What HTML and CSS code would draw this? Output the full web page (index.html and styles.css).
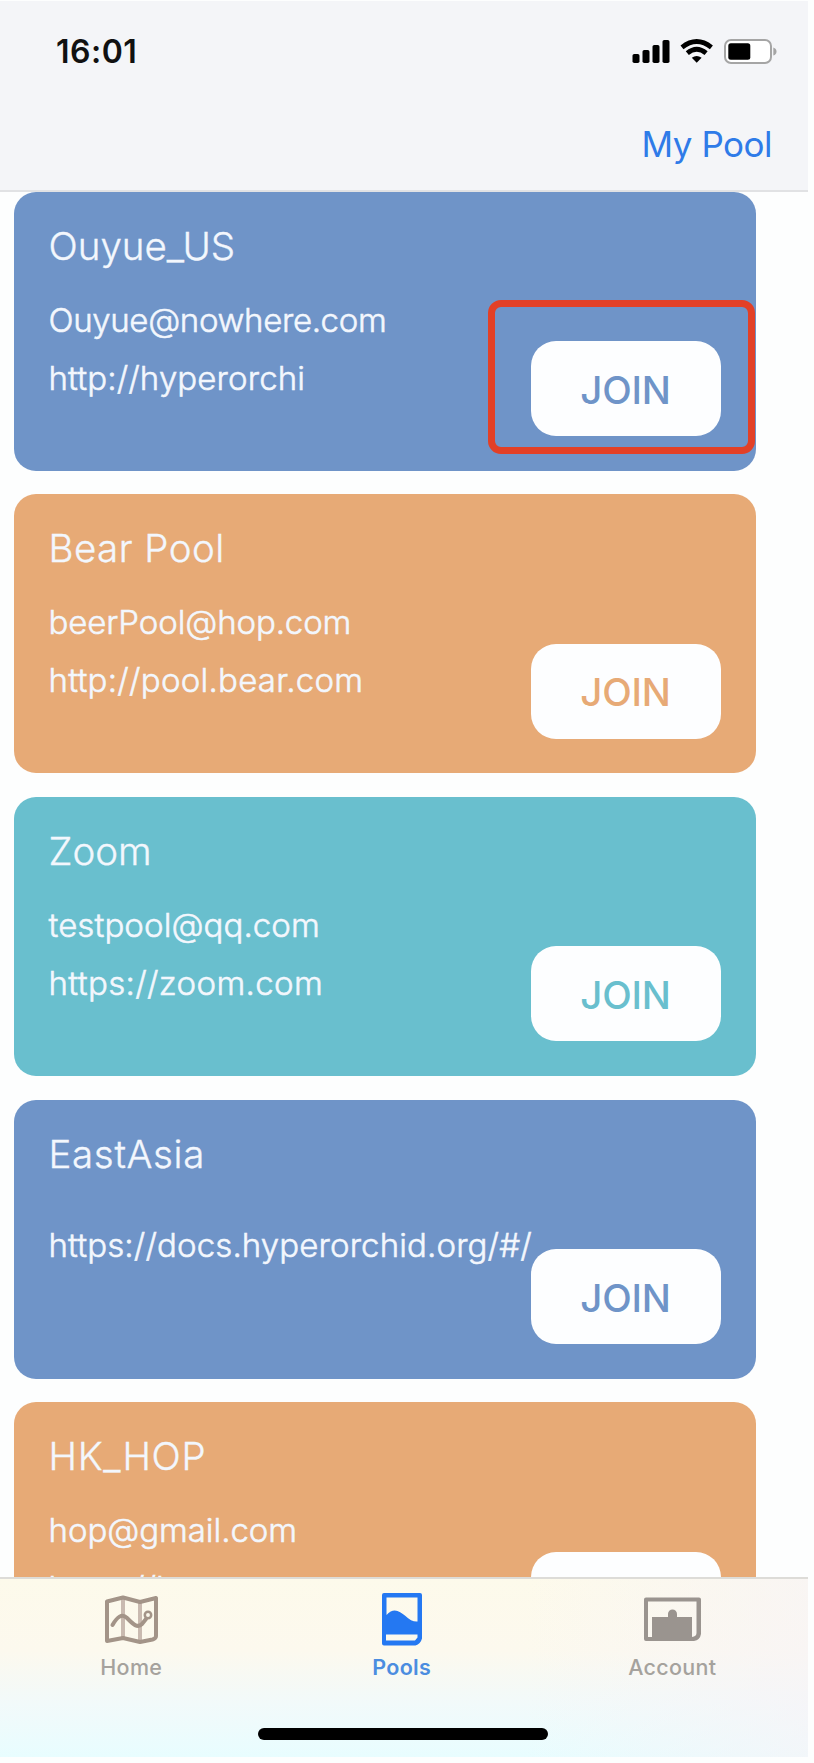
FILE: index.html
```html
<!DOCTYPE html>
<html lang="en">
<head>
<meta charset="utf-8">
<title>Pools</title>
<link rel="stylesheet" href="styles.css">
</head>
<body>
<div class="phone">
  <header class="header">
    <div class="status">
      <span class="time">16:01</span>
      <svg class="status-icons" width="146" height="26" viewBox="0 0 146 26">
        <rect x="0.5" y="15" width="7" height="9" rx="1.8"/>
        <rect x="10.5" y="11" width="7" height="13" rx="1.8"/>
        <rect x="20.5" y="6" width="7" height="18" rx="1.8"/>
        <rect x="30.5" y="1" width="7" height="23" rx="1.8"/>
        <g fill="none" stroke="#000" stroke-width="4.8">
          <path d="M50 8.3Q64.7-3.3 79.4 8.3"/>
          <path d="M55.3 14.2Q64.7 6.4 74.1 14.2"/>
        </g>
        <path d="M59.8 18.8Q64.7 15 69.6 18.8L64.7 23.8Z"/>
        <rect x="93" y="1" width="46" height="23" rx="6" fill="#fff" stroke="#a5a5a5" stroke-width="2"/>
        <rect x="96.3" y="4.3" width="22" height="16.4" rx="2.5"/>
        <path d="M141.3 8.5Q144.5 9.5 144.5 12.5T141.3 16.5Z" fill="#a5a5a5"/>
      </svg>
    </div>
    <a class="my-pool">My Pool</a>
  </header>
  <main class="list">
    <section class="card blue">
      <h2 class="name n1">Ouyue_US</h2>
      <p class="line email e1">Ouyue@nowhere.com</p>
      <p class="line u1">http://hyperorchi</p>
      <button class="join">JOIN</button>
      <span class="highlight"></span>
    </section>
    <section class="card orange">
      <h2 class="name n2">Bear Pool</h2>
      <p class="line email e2">beerPool@hop.com</p>
      <p class="line u2">http://pool.bear.com</p>
      <button class="join">JOIN</button>
    </section>
    <section class="card teal">
      <h2 class="name n3">Zoom</h2>
      <p class="line email e3">testpool@qq.com</p>
      <p class="line u3">https://zoom.com</p>
      <button class="join">JOIN</button>
    </section>
    <section class="card blue">
      <h2 class="name n4">EastAsia</h2>
      <p class="line solo u4">https://docs.hyperorchid.org/#/</p>
      <button class="join">JOIN</button>
    </section>
    <section class="card orange">
      <h2 class="name n5">HK_HOP</h2>
      <p class="line email e5">hop@gmail.com</p>
      <p class="line u5">https://hop.com</p>
      <button class="join">JOIN</button>
    </section>
  </main>
  <nav class="tabs">
    <div class="tab-row">
      <a class="tab home">
        <svg width="56" height="56" viewBox="0 0 56 56" fill="none" stroke="#a39488" stroke-width="4" stroke-linejoin="round">
          <path stroke-width="4" stroke="#c9bab0" d="M20 7V47M37 10V50"/>
          <path d="M4 10.500L20 6.500L37 11L53 7V45Q53 47.500 49.500 48.500L37 51L20 47L4 50Z"/>
          <path stroke-linecap="round" d="M9.500 34C14 26 19 22 24 27C29 32 34 38 39 33L43 28"/>
          <circle cx="45" cy="24" r="3.200" stroke-width="2.500" fill="#fbf8ec"/>
        </svg>
        <span class="label">Home</span>
      </a>
      <a class="tab pools">
        <svg width="56" height="56" viewBox="0.5 0 56 56">
          <path fill="#2478f2" fill-rule="evenodd" d="M10.500 2H46.500Q48.500 2 48.500 4V47.500Q47 53 42 54.500H10.500Q8.500 54.500 8.500 52.500V4Q8.500 2 10.500 2ZM13 6.500V24C20 16 26 20 32 25Q38 31 44 30.500V6.500ZM12.500 43.500V49.500H41.500L44 46.500V43.500Z"/>
        </svg>
        <span class="label">Pools</span>
      </a>
      <a class="tab account">
        <svg width="58" height="56" viewBox="0 0 58 56">
          <path fill="#9a948f" fill-rule="evenodd" d="M3 6.500H56Q58 6.500 58 8.500V43Q57 49 51 50H3Q1 50 1 48V8.500Q1 6.500 3 6.500ZM5 10.500V46H9V26H25V23A4.500 4.500 0 0 1 34 23V26H49V46Q53.500 45.500 53.500 42V10.500Z"/>
        </svg>
        <span class="label">Account</span>
      </a>
    </div>
    <div class="home-bar"></div>
  </nav>
</div>
</body>
</html>
```
FILE: styles.css
```css
* { box-sizing: border-box; }
body {
  margin: 0;
  background: #fdfefe;
  font-family: Inter, "Liberation Sans", sans-serif;
}
.phone {
  display: flex;
  flex-direction: column;
  width: 814px;
  height: 1763px;
  padding-top: 1px;
  overflow: hidden;
}
.header {
  display: flex;
  flex-direction: column;
  flex: none;
  width: 808px;
  height: 191px;
  background: #f4f5f8;
  border-bottom: 2px solid #e1e2e4;
}
.status {
  display: flex;
  justify-content: space-between;
  align-items: flex-start;
  padding: 38px 30px 0 56px;
}
.time {
  font-size: 32px;
  line-height: 26px;
  font-weight: 600;
  letter-spacing: 0.500px;
  color: #111;
}
.my-pool {
  align-self: flex-end;
  margin: 57px 36px 0 0;
  font-size: 35px;
  line-height: 44px;
  letter-spacing: -0.500px;
  color: #2f7be8;
}
.list {
  display: flex;
  flex-direction: column;
  gap: 23.700px;
  height: 1386px;
  flex: none;
  margin-top: -1px;
  padding: 0.600px 0 0 14px;
  overflow: hidden;
}
.card {
  position: relative;
  flex: none;
  width: 742px;
  height: 279px;
  padding: 31px 34.500px;
  border-radius: 22px;
  color: #f3f7fd;
  -webkit-text-stroke: 0.350px #f3f7fd;
}
.blue { background: #6f94c8; --tone: #6f94c8; }
.orange { background: #e7aa76; --tone: #e7aa76; }
.teal { background: #69bfce; --tone: #69bfce; }
.name {
  margin: 0;
  font-size: 38.500px;
  line-height: 46px;
  font-weight: 300;
}
.line {
  margin: 0;
  font-size: 33px;
  line-height: 58px;
  font-weight: 300;
  white-space: nowrap;
  -webkit-text-stroke-width: 0.550px;
}
.email { margin-top: 22px; }
.solo { margin-top: 39px; }
.n2 { letter-spacing: 0.450px; }
.n4, .n5 { letter-spacing: 0.650px; }
.e1 { letter-spacing: -0.350px; }
.e2 { letter-spacing: -0.120px; }
.e3 { letter-spacing: 0.080px; }
.e5 { letter-spacing: -0.050px; }
.u1, .u4 { letter-spacing: 0.120px; }
.u2 { letter-spacing: 0.250px; }
.u3 { letter-spacing: 0.350px; }
.join {
  position: absolute;
  right: 35px;
  bottom: 34.500px;
  width: 190px;
  height: 95px;
  padding: 2px 1px 0 0;
  border: 0;
  border-radius: 25px;
  background: #fdfeff;
  color: var(--tone);
  font: 500 38.500px Inter, sans-serif;
  letter-spacing: -0.200px;
  -webkit-text-stroke: 0;
}
.highlight {
  position: absolute;
  right: 1.500px;
  bottom: 17px;
  width: 267px;
  height: 154px;
  border: 7.500px solid #e24027;
  border-radius: 13px;
}
.tabs {
  flex: none;
  width: 808px;
  height: 180px;
  border-top: 2px solid #dddcd8;
  background: linear-gradient(90deg, #fcf7f400, #fcf7f400 65%, #f7f3f7aa), linear-gradient(#fdfaeb 0, #fcf9ee 40%, #f2fafa 70%, #e8fdff);
}
.tab-row {
  display: grid;
  grid-template-columns: repeat(3, 270.500px);
  margin-left: -4px;
  padding-top: 12px;
  height: 149px;
}
.tab {
  display: flex;
  flex-direction: column;
  align-items: center;
  color: #a5a29d;
}
.label {
  margin-top: 6px;
  font-size: 21.500px;
  line-height: 28px;
  font-weight: 500;
  letter-spacing: 0.300px;
}
.pools .label { color: #4b8de0; font-weight: 600; }
.home-bar {
  width: 290px;
  height: 12px;
  margin-left: 257.500px;
  border-radius: 6px;
  background: #000;
}
```
